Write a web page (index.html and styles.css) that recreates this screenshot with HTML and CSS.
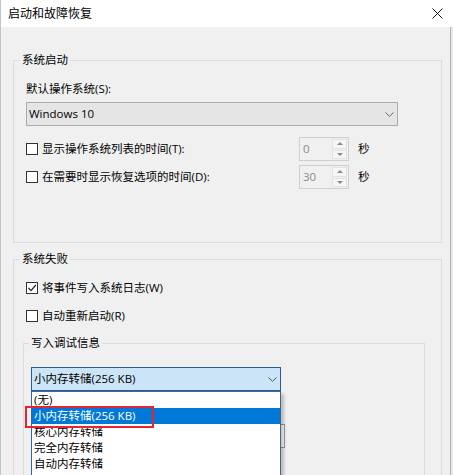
FILE: index.html
```html
<!DOCTYPE html>
<html lang="zh-CN">
<head>
<meta charset="utf-8">
<title>启动和故障恢复</title>
<link rel="stylesheet" href="styles.css">
</head>
<body>
<div class="window">
  <div class="titlebar">
    <span class="title">启动和故障恢复</span>
    <svg class="close" viewBox="0 0 11 11" width="11" height="11"><path d="M0.5 0.5 L10.5 10.5 M10.5 0.5 L0.5 10.5" stroke="#111" stroke-width="1" fill="none"/></svg>
  </div>
  <div class="content">
    <fieldset class="group g1">
      <legend>系统启动</legend>
      <div class="field-label">默认操作系统(S):</div>
      <div class="combo combo-os">
        <span>Windows 10</span>
        <svg class="chev" viewBox="0 0 9 5" width="9" height="5"><path d="M0.5 0.5 L4.5 4.3 L8.5 0.5" stroke="#666" stroke-width="1" fill="none"/></svg>
      </div>
      <div class="timer-row">
        <label class="check"><span class="box"></span><span>显示操作系统列表的时间(T):</span></label>
        <div class="spin"><span class="val">0</span><span class="btns"><span class="btn"><i class="up"></i></span><span class="btn"><i class="down"></i></span></span></div>
        <span class="unit">秒</span>
      </div>
      <div class="timer-row">
        <label class="check"><span class="box"></span><span>在需要时显示恢复选项的时间(D):</span></label>
        <div class="spin"><span class="val">30</span><span class="btns"><span class="btn"><i class="up"></i></span><span class="btn"><i class="down"></i></span></span></div>
        <span class="unit">秒</span>
      </div>
    </fieldset>
    <fieldset class="group g2">
      <legend>系统失败</legend>
      <label class="check row-check"><span class="box"><svg viewBox="0 0 10 10" width="10" height="10"><path d="M1.5 5 L4 7.6 L8.8 2" stroke="#222" stroke-width="1.2" fill="none"/></svg></span><span>将事件写入系统日志(W)</span></label>
      <label class="check row-check"><span class="box"></span><span>自动重新启动(R)</span></label>
      <fieldset class="group g3">
        <legend>写入调试信息</legend>
        <div class="dump-wrap">
          <div class="combo combo-dump">
            <span>小内存转储(256 KB)</span>
            <svg class="chev" viewBox="0 0 9 5" width="9" height="5"><path d="M0.5 0.5 L4.5 4.3 L8.5 0.5" stroke="#4a5a6e" stroke-width="1" fill="none"/></svg>
          </div>
          <div class="dump-file"></div>
          <ul class="popup">
            <li>(无)</li>
            <li class="sel">小内存转储(256 KB)</li>
            <li>核心内存转储</li>
            <li>完全内存转储</li>
            <li>自动内存转储</li>
          </ul>
          <div class="annot"></div>
        </div>
      </fieldset>
    </fieldset>
  </div>
</div>
</body>
</html>
```
FILE: styles.css
```css
* { box-sizing: border-box; }
html, body { margin: 0; padding: 0; }
body {
  font-family: "Open Sans", "Noto Sans CJK SC", sans-serif;
  font-size: 11.5px;
  color: #000;
  background: #fff;
}
.window {
  width: 453px;
  height: 475px;
  overflow: hidden;
  border-left: 1px solid #c4c4c4;
  background: #e8e8e8;
  display: flex;
  flex-direction: column;
}
.titlebar {
  height: 27px;
  flex: none;
  background: #fff;
  display: flex;
  align-items: center;
  padding: 0 10px 0 7px;
}
.title { font-size: 12px; line-height: 16px; }
.close { margin-left: auto; display: block; }
.content {
  flex: 1;
  background: #f0f0f0;
  margin-right: 2px;
  border-right: 1px solid #b3b3b3;
  padding: 26px 0 0 12px;
}
.group {
  margin: 0;
  border: 1px solid #dcdcdc;
  min-width: 0;
}
legend {
  line-height: 14px;
  padding: 0 2px;
}
.g1 { width: 429px; padding: 14px 0 53px 12px; }
.g1 legend { margin-left: -6px; }
.g2 { width: 429px; margin-top: 9px; padding: 12px 0 0 9px; }
.g2 legend { margin-left: -3px; }
.g3 { width: 402px; margin-top: 10px; padding: 17px 0 60px 7px; }
.g3 legend { margin-left: -2px; }

.field-label { line-height: 16px; }
.combo {
  height: 24px;
  display: flex;
  align-items: center;
  border: 1px solid;
  padding-left: 2px;
  line-height: 16px;
}
.chev { margin-left: auto; display: block; }
.combo-os {
  width: 372px;
  margin-top: 5px;
  background: #e5e5e5;
  border-color: #adadad;
}
.combo-os .chev { margin-right: 3px; }

.timer-row {
  display: flex;
  align-items: center;
  height: 24px;
  margin-top: 11px;
}
.timer-row + .timer-row { margin-top: 4px; }
.check {
  display: flex;
  align-items: center;
  gap: 4px;
  line-height: 16px;
}
.timer-row .check { width: 273px; }
.box {
  width: 12px;
  height: 12px;
  flex: none;
  border: 1px solid #333;
  background: #fff;
  display: flex;
  align-items: center;
  justify-content: center;
}
.box svg { display: block; }
.spin {
  width: 50px;
  height: 24px;
  border: 1px solid #cfcfcf;
  display: flex;
}
.val {
  flex: 1;
  padding-left: 3px;
  color: #8a8a8a;
  line-height: 22px;
}
.btns {
  width: 16px;
  display: flex;
  flex-direction: column;
  padding: 1px 1px 1px 0;
  gap: 1px;
}
.btn {
  flex: 1;
  display: flex;
  align-items: center;
  justify-content: center;
  background: #f6f6f6;
  border: 1px solid #e2e2e2;
}
.up, .down {
  width: 0;
  height: 0;
  border-left: 3px solid transparent;
  border-right: 3px solid transparent;
}
.up { border-bottom: 3px solid #8a8a8a; }
.down { border-top: 3px solid #8a8a8a; }
.unit { margin-left: 9px; line-height: 16px; }

.row-check { margin-left: 3px; height: 20px; }
.row-check + .row-check { margin-top: 8px; }

.dump-wrap { position: relative; }
.combo-dump {
  width: 250px;
  background: #cce4f7;
  border-color: #2c5d8f;
}
.combo-dump .chev { margin-right: 3px; }
.dump-file {
  margin-top: 33px;
  width: 254px;
  height: 24px;
  border: 1px solid #9a9a9a;
  background: #fff;
}
.popup {
  position: absolute;
  left: 0;
  top: 24px;
  width: 250px;
  height: 110px;
  margin: 0;
  padding: 0;
  list-style: none;
  background: #fff;
  border: 1px solid #3a6796;
  box-shadow: 3px 3px 3px rgba(0, 0, 0, 0.22);
}
.popup li {
  height: 16px;
  line-height: 16px;
  padding-left: 2px;
}
.popup li.sel { background: #0078d7; color: #fff; }
.annot {
  position: absolute;
  left: -6px;
  top: 39px;
  width: 129px;
  height: 22px;
  border: 2px solid #e3262f;
}
```
